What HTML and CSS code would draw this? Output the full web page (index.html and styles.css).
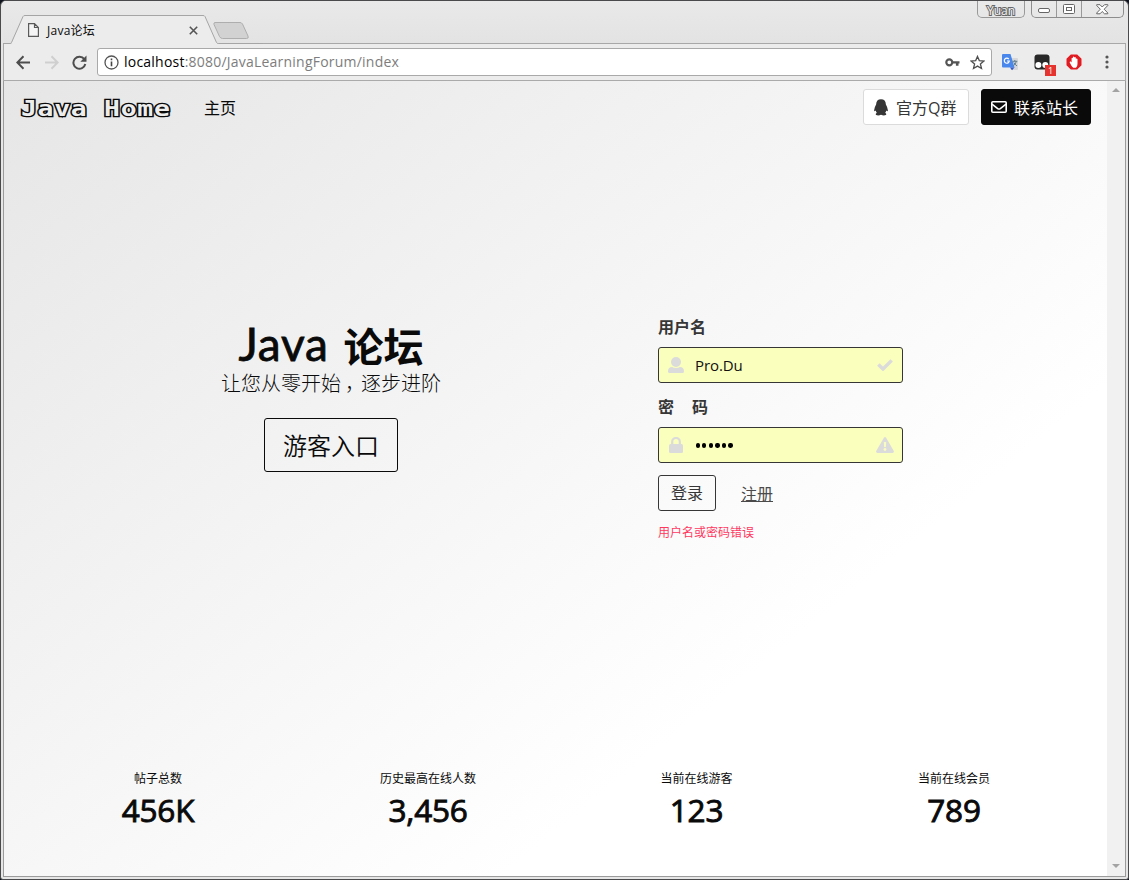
FILE: index.html
```html
<!DOCTYPE html>
<html lang="zh-CN">
<head>
<meta charset="utf-8">
<title>Java论坛</title>
<link rel="stylesheet" href="styles.css">
</head>
<body>
<div class="window">
  <header class="tabstrip">
    <svg class="tabs" width="260" height="32" viewBox="0 0 260 32">
      <path d="M0 29.5H8.500L20.500 2.500Q21 1.500 22.500 1.500H200Q201.500 1.500 202 2.500L213.500 28.500Q214 29.500 215.500 29.500H260V32H0Z" fill="#ececec"/>
      <path d="M0 29.500H7Q8 29.500 8.500 28.500L20 2.500Q20.500 1.500 22 1.500H200Q201.500 1.500 202 2.500L213.500 28.500Q214 29.500 215.500 29.500H260" fill="none" stroke="#a5a5a5"/>
      <path d="M212 8.500H237Q238.500 8.500 239.500 10L245 22Q246 24.500 243.500 24.500H219.500Q217.500 24.500 216.500 22.500L211 10.500Q210.500 8.500 212 8.500Z" fill="#d2d2d2" stroke="#aeaeae"/>
    </svg>
    <div class="tab">
      <svg width="11" height="14" viewBox="0 0 11 14" fill="#f5f5f5" stroke="#5a5a5a" stroke-width="1.200"><path d="M.6.6H6.500L10.400 4.500V13.400H.6ZM6.500.6V4.500H10.400"/></svg>
      <span class="tab-title">Java论坛</span>
      <svg class="tab-close" width="9" height="9" viewBox="0 0 9 9" stroke="#555" stroke-width="1.600"><path d="M.8.8 8.200 8.200M8.200.8.8 8.200"/></svg>
    </div>
    <div class="user">Yuan</div>
    <div class="controls">
      <span><svg width="13" height="6" viewBox="0 0 13 6"><rect x=".5" y=".5" width="11" height="4" rx="1.500" fill="#fff" stroke="#666"/></svg></span>
      <span><svg width="13" height="11" viewBox="0 0 13 11" fill="#fff" stroke="#666"><rect x=".5" y=".5" width="11" height="9" rx="1"/><rect x="3.500" y="3.500" width="5" height="3"/></svg></span>
      <span><svg width="13" height="11" viewBox="0 0 13 11"><path d="M.7.7H4L6.200 3 8.500.7H11.800V1.500L8.200 5.200 11.800 9V9.800H8.500L6.200 7.500 4 9.800H.7V9L4.300 5.200.7 1.500Z" fill="#fff" stroke="#666"/></svg></span>
    </div>
  </header>
  <div class="toolbar">
    <svg width="15" height="15" viewBox="0 0 15 15" fill="none" stroke="#4d4d4d" stroke-width="2"><path d="M14 7.500H1.500M7.500 1.200 1.300 7.500 7.500 13.800"/></svg>
    <svg class="forward" width="15" height="15" viewBox="0 0 15 15" fill="none" stroke="#cfcfcf" stroke-width="2"><path d="M1 7.500H13.500M7.500 1.200 13.700 7.500 7.500 13.800"/></svg>
    <svg class="reload" width="15" height="15" viewBox="0 0 15 15"><path d="M12.300 4.200A6 6 0 1 0 13.300 9" fill="none" stroke="#4d4d4d" stroke-width="2"/><path d="M14.500.5V6.700H8.300Z" fill="#4d4d4d"/></svg>
    <div class="address">
      <svg width="15" height="15" viewBox="0 0 15 15"><circle cx="7.500" cy="7.500" r="6.500" fill="none" stroke="#555" stroke-width="1.300"/><path d="M6.700 6.400H8.300V11.300H6.700ZM6.700 3.600H8.300V5.200H6.700Z" fill="#444"/></svg>
      <span class="url"><b>localhost</b>:8080/JavaLearningForum/index</span>
      <svg class="key" width="15" height="9" viewBox="0 0 15 9"><circle cx="4.300" cy="4.300" r="3" fill="none" stroke="#555" stroke-width="2.200"/><path d="M7.500 3.200H14.500V5.400H13.500V7.800H10.900V5.400H7.500Z" fill="#555"/></svg>
      <svg width="15" height="15" viewBox="0 0 15 15"><path d="M7.500 1.400 9.300 5.600 13.900 6 10.400 9 11.500 13.500 7.500 11.100 3.500 13.500 4.600 9 1.100 6 5.700 5.600Z" fill="none" stroke="#505050" stroke-width="1.300"/></svg>
    </div>
    <svg class="translate" width="17" height="17" viewBox="0 0 17 17"><path d="M6 4H15Q16 4 16 5V15Q16 16 15 16H9Z" fill="#d5d7da"/><path d="M0 1Q0 0 1 0H8.500L12.500 13.500H1Q0 13.500 0 12.500Z" fill="#4a87ed"/><path d="M8 13.500H12.500L10 16.300Z" fill="#3559c7"/><path d="M6.800 5.200A2.500 2.500 0 1 0 7.300 7H5" fill="none" stroke="#fff" stroke-width="1.200"/><path d="M10.500 7.300H15.300M12.800 6V7.300M14.300 7.500Q13.500 10.300 11.500 11.700M11.800 8.500Q13 10.700 15 11.900" fill="none" stroke="#607d8b"/></svg>
    <div class="tamper">
      <svg width="16" height="16" viewBox="0 0 16 16"><rect x=".5" y=".5" width="15" height="15" rx="3" fill="#282828"/><circle cx="4.400" cy="11" r="3" fill="#fff"/><circle cx="11.300" cy="11" r="3" fill="#fff"/></svg>
      <span class="count">1</span>
    </div>
    <svg class="adblock" width="16" height="16" viewBox="0 0 16 16"><path d="M4.800.5H11.200L15.500 4.800V11.200L11.200 15.500H4.800L.5 11.200V4.800Z" fill="#e11b22"/><path d="M3.600 8.200Q3.800 7.200 4.800 7.600L5.600 8.600V4.200Q6.200 3.200 6.900 4.200V2.900Q7.600 2 8.300 2.900V3.400Q9.100 2.500 9.800 3.500V4.800Q10.900 4 11.500 5V10Q11.500 12.500 10 13.700H7.200Q5.500 12.500 3.600 8.200Z" fill="#fff"/></svg>
    <svg class="menu" width="4" height="14" viewBox="0 0 4 14" fill="#555"><circle cx="2" cy="2" r="1.600"/><circle cx="2" cy="7" r="1.600"/><circle cx="2" cy="12" r="1.600"/></svg>
  </div>
  <div class="viewport">
    <main class="hero">
      <nav class="nav">
        <span class="logo"><span>Java Home</span></span>
        <a class="home">主页</a>
        <a class="button qq"><svg width="14" height="17" viewBox="0 0 14 17"><path d="M7 .3Q11.700.3 11.900 5.500Q13.700 8.500 13.900 11.300Q13.800 13 12.300 11.400Q12 12.700 11.200 13.800Q12.700 14.600 12.200 15.700Q10 17 7 15.800Q4 17 1.800 15.700Q1.300 14.600 2.800 13.800Q2 12.700 1.700 11.400Q.2 13 .1 11.300Q.3 8.500 2.100 5.500Q2.300.3 7 .3Z" fill="#363636"/></svg><span>官方Q群</span></a>
        <a class="button contact"><svg width="16" height="12" viewBox="0 0 16 12" fill="none" stroke="#fff" stroke-width="1.600"><rect x=".8" y=".8" width="14.400" height="10.400" rx="1"/><path d="M1 3.200 6.700 7.600Q8 8.500 9.300 7.600L15 3.200"/></svg><span>联系站长</span></a>
      </nav>
      <section class="body">
        <div class="intro">
          <h1><span class="java">Java</span><span>论坛</span></h1>
          <p>让您从零开始<span class="comma">，</span>逐步进阶</p>
          <a class="guest">游客入口</a>
        </div>
        <form class="login">
          <label>用户名</label>
          <div class="field">
            <svg width="16" height="16" viewBox="0 0 16 16" fill="#dbdbdb"><circle cx="8" cy="5" r="5"/><path d="M0 14.500Q0 10 4 10Q8 12 12 10Q16 10 16 14.500Q16 16 14.500 16H1.500Q0 16 0 14.500Z"/></svg>
            <span class="value">Pro.Du</span>
            <svg width="16" height="12" viewBox="0 0 16 12"><path d="M1.300 5.500 6 10 14.700 1.400" fill="none" stroke="#dbdbdb" stroke-width="3.400"/></svg>
          </div>
          <label class="pw-label"><span>密</span><span>码</span></label>
          <div class="field">
            <svg class="lock" width="16" height="16" viewBox="0 0 16 16"><path d="M4.200 8V4.800A3.800 3.800 0 0 1 11.800 4.800V8" fill="none" stroke="#dbdbdb" stroke-width="2.200"/><rect x="1" y="7" width="14" height="9" rx="1.500" fill="#dbdbdb"/></svg>
            <span class="value dots"><i></i><i></i><i></i><i></i><i></i><i></i></span>
            <svg class="warn" width="18" height="16" viewBox="0 0 18 16"><path d="M7.900.8Q9 -.7 10.100.8L17.800 14Q18.300 15.800 16.600 16H1.400Q-.3 15.800.2 14Z" fill="#dbdbdb"/><path d="M7.800 5H10.200L9.900 10H8.100Z" fill="#f9fcc0"/><circle cx="9" cy="12.500" r="1.400" fill="#f9fcc0"/></svg>
          </div>
          <div class="actions"><a class="submit">登录</a><a class="register">注册</a></div>
          <p class="error">用户名或密码错误</p>
        </form>
      </section>
      <footer class="stats">
        <div><span>帖子总数</span><b>456K</b></div>
        <div><span>历史最高在线人数</span><b>3,456</b></div>
        <div><span>当前在线游客</span><b>123</b></div>
        <div><span>当前在线会员</span><b>789</b></div>
      </footer>
    </main>
    <div class="scrollbar">
      <svg width="8" height="4" viewBox="0 0 8 4"><path d="M0 4 4 0 8 4Z" fill="#a3a3a3"/></svg>
      <svg width="8" height="4" viewBox="0 0 8 4"><path d="M0 0 4 4 8 0Z" fill="#a3a3a3"/></svg>
    </div>
  </div>
</div>
</body>
</html>
```
FILE: styles.css
```css
* { box-sizing: border-box; }
body { margin: 0; background: #10141f; font-family: "Open Sans", "Noto Sans CJK SC", sans-serif; color: #0a0a0a; overflow: hidden; }
svg { display: block; flex: none; }
.window { width: 1129px; height: 880px; border: 1px solid #4a4a4c; border-radius: 6px 6px 3px 3px; background: #e6e6e6; padding: 0 2px 2px; display: flex; flex-direction: column; overflow: hidden; }
.tabstrip { height: 43px; flex: none; display: grid; grid-template-columns: 260px 1fr auto auto; background: linear-gradient(#e9e9e9, #e3e3e3); border-bottom: 1px solid #a8a8a8; }
.tabs { grid-column: 1; grid-row: 1; margin-top: 13px; }
.tab { grid-column: 1; grid-row: 1; display: flex; align-items: center; height: 28px; margin: 15px 0 0 25px; font-size: 12px; }
.tab-title { margin-left: 8px; width: 137px; letter-spacing: .25px; }
.tab-close { margin-left: 5px; }
.user { grid-column: 3; width: 48px; height: 17px; margin-right: 6px; border: 1px solid #999; border-top: 0; border-radius: 0 0 5px 5px; font-size: 12px; line-height: 19px; text-align: center; color: #f4f4f4; -webkit-text-stroke: 2px #666; paint-order: stroke fill; }
.controls { grid-column: 4; display: flex; width: 93px; height: 17px; margin-right: 2px; border: 1px solid #8d8d8d; border-top: 0; border-radius: 0 0 5px 5px; }
.controls span { display: flex; flex: 0 0 25px; align-items: center; justify-content: center; border-right: 1px solid #999; }
.controls span:first-child { padding-top: 4px; }
.controls span:last-child { flex: 1; border: 0; }
.toolbar { height: 37px; flex: none; display: flex; align-items: center; padding: 0 16px 0 12px; background: #ececec; border: 1px solid #aaa; border-width: 0 1px 1px; }
.forward { margin-left: 13px; }
.reload { margin-left: 13px; }
.address { display: flex; align-items: center; width: 895px; height: 28px; margin-left: 10px; padding: 0 6px; background: #fff; border: 1px solid #a9a9a9; border-radius: 3px; }
.url { flex: 1; margin-left: 5px; font-size: 14px; line-height: 26px; color: #7d7d7d; letter-spacing: .22px; }
.url b { font-weight: 400; color: #000; }
.key { margin-right: 10px; }
.translate { margin-left: 10px; }
.tamper { position: relative; margin-left: 15px; }
.count { position: absolute; left: 11px; top: 11px; width: 11px; height: 11px; background: #e5332f; color: #fff; font-size: 9px; line-height: 11px; text-align: center; }
.adblock { margin-left: 16px; }
.menu { margin-left: auto; }
.viewport { flex: 1; min-height: 0; display: flex; border: 1px solid #9b9b9b; border-top: 0; }
.hero { width: 1103px; flex: none; display: flex; flex-direction: column; background: linear-gradient(141deg, #e6e6e6 0%, #fff 71%, #fff 100%); }
.nav { display: flex; align-items: center; height: 52px; padding: 0 16px 0 17px; font-size: 16px; }
.logo { width: 183px; height: 27px; }
.logo span { display: inline-block; font: bold 22px/30px "DejaVu Sans Mono", monospace; letter-spacing: .600px; transform: scaleX(1.2); transform-origin: left; color: #ededed; -webkit-text-stroke: 2.700px #0a0a0a; paint-order: stroke fill; white-space: pre; }
.home { flex: 1; padding-bottom: 1px; }
.button { display: flex; align-items: center; height: 36px; padding: 0 10px; border: 1px solid #dbdbdb; border-radius: 3px; background: #fff; color: #363636; white-space: nowrap; }
.button span { padding-bottom: 1px; }
.qq { width: 106px; margin-right: 12px; }
.qq span { margin-left: 8px; }
.contact { width: 110px; background: #0a0a0a; border-color: #0a0a0a; color: #fff; padding-left: 9px; }
.contact span { margin-left: 7px; }
.body { display: flex; height: 631px; padding-top: 183px; }
.intro { width: 654px; display: flex; flex-direction: column; align-items: center; }
h1 { display: flex; gap: 15px; align-items: center; margin: 0; height: 55px; font-size: 40px; font-weight: 700; line-height: 44px; }
h1 span { margin-top: 6px; }
h1 .java { margin-top: 1px; font-family: Lato, sans-serif; font-size: 46px; font-weight: 400; letter-spacing: .8px; -webkit-text-stroke: .8px #0a0a0a; }
.intro p { margin: 0; font-size: 20px; line-height: 26px; font-weight: 300; white-space: nowrap; }
.comma { display: inline-block; width: 20px; text-indent: 4px; }
.guest { width: 134px; height: 54px; margin-top: 21px; border: 1px solid #0a0a0a; border-radius: 3px; font-size: 24px; line-height: 53px; text-align: center; font-weight: 350; }
.login { width: 245px; color: #363636; font-size: 16px; }
label { display: block; height: 27px; line-height: 24px; font-weight: 600; }
.login > label:first-child { height: 31px; line-height: 22px; }
.field { display: flex; align-items: center; height: 36px; padding: 0 9px; border: 1px solid #363636; border-radius: 3px; background: #faffbd; }
.value { flex: 1; margin-left: 11px; color: #111; font-size: 15px; letter-spacing: -.1px; }
.dots { display: flex; gap: 2.300px; padding: 1px 0 0 .5px; }
.dots i { width: 4.300px; height: 4.300px; border-radius: 50%; background: #000; }
.field .warn { margin-right: -1px; }
.pw-label { display: flex; gap: 18px; height: 44px; padding-top: 12px; }
.actions { display: flex; align-items: center; margin-top: 12px; }
.submit { width: 58px; height: 36px; border: 1px solid #363636; border-radius: 3px; line-height: 34px; text-align: center; }
.register { margin-left: 25px; text-decoration: underline; color: #4a4a4a; }
.error { margin: 13px 0 0; font-size: 12px; line-height: 18px; color: #ff3860; }
.stats { display: grid; grid-template-columns: 308px 232px 305px 210px; padding-top: 6px; }
.stats div { display: flex; flex-direction: column; align-items: center; }
.stats span { font-size: 12px; line-height: 18px; }
.stats b { margin-top: -2px; font: 400 31.500px/48px "Open Sans", sans-serif; letter-spacing: -.2px; -webkit-text-stroke: .9px #0a0a0a; }
.scrollbar { flex: 1; display: flex; flex-direction: column; align-items: center; justify-content: space-between; padding: 7px 0 8px; background: #f1f1f1; }
```
